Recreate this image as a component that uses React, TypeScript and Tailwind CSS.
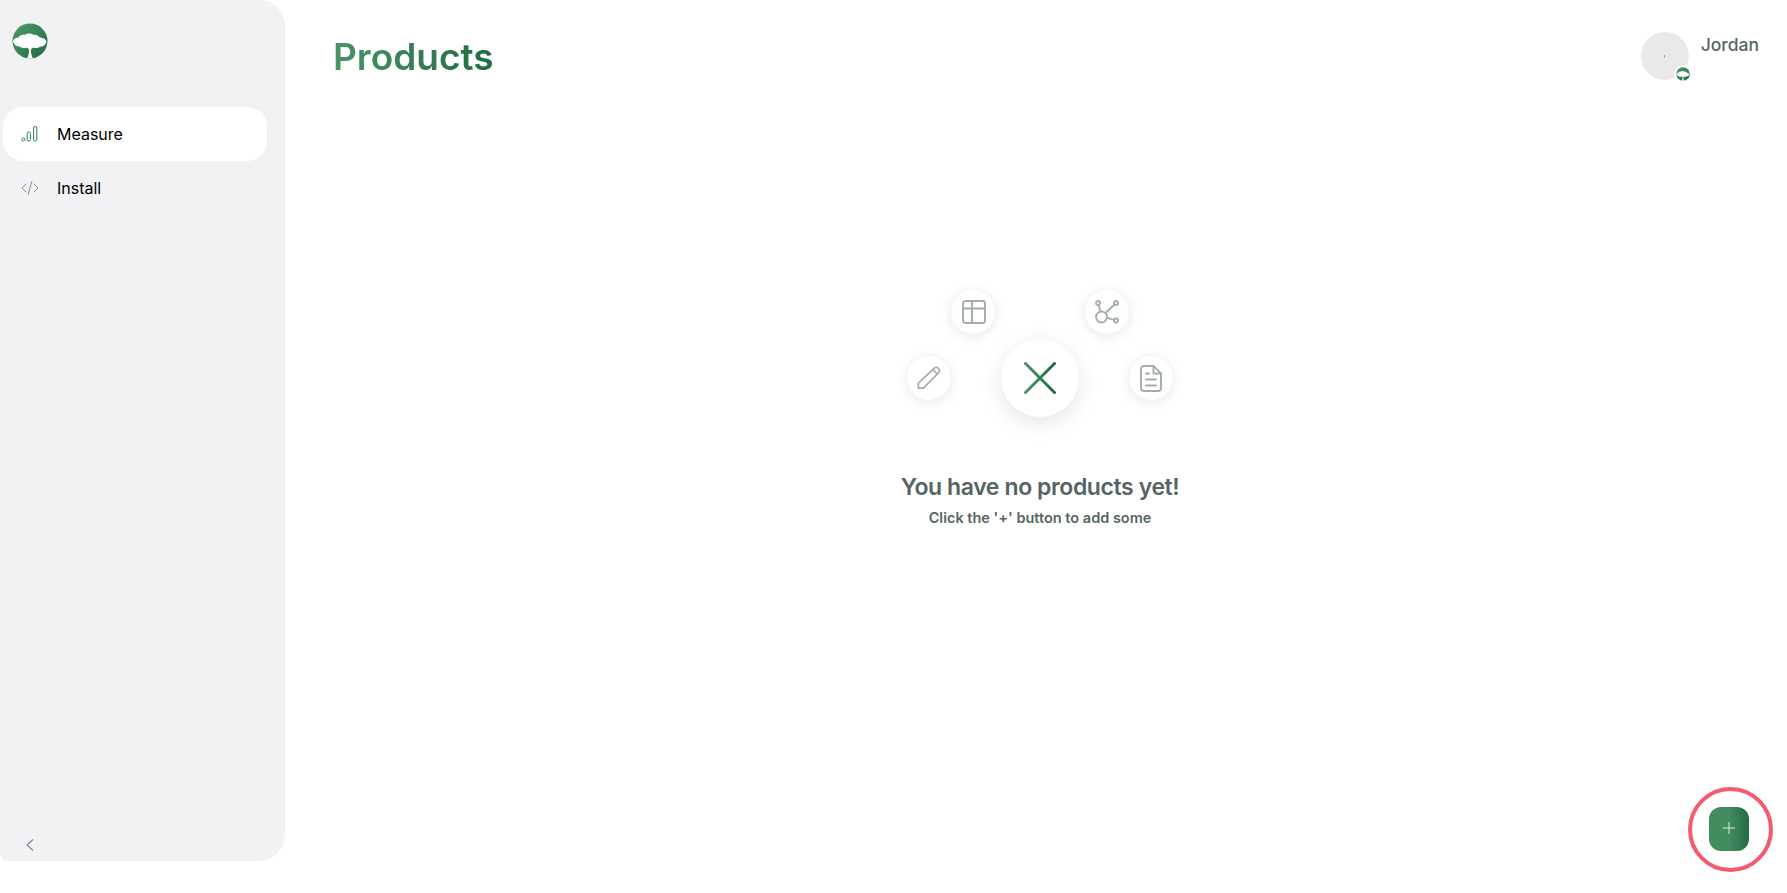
import React from 'react'

const sans = "font-['Inter','Liberation_Sans',sans-serif]"

function TreeLogo({ id, className }: { id: string; className?: string }) {
  return (
    <svg viewBox="0 0 36 36" className={className}>
      <defs>
        <linearGradient id={id} x1="0" y1="0" x2="1" y2="1">
          <stop offset="0" stopColor="#4f9a6c" />
          <stop offset="1" stopColor="#1f6b42" />
        </linearGradient>
      </defs>
      <circle cx="18" cy="18" r="17.5" fill={`url(#${id})`} />
      <path
        d="M1 18.5c.5-2.5 3-4 5.5-4 1-2 3.5-3 6-2.5 2-2 7-2 9 0 2.5-.5 5 .5 6 2.5 3 0 6 1.5 7 4-.5 3-3 5-6 5-2 1.5-5 2-7 1-1 .5-2 1-2.5 2-.2 3 .3 6 2 9h-6c1.7-3 2.2-6 2-9-.5-1-1.5-1.5-2.5-2-2 1-5 .5-7-1-3 0-5.5-2-6.5-5z"
        fill="#ffffff"
      />
    </svg>
  )
}

function MeasureIcon() {
  return (
    <svg viewBox="0 0 18 18" fill="none" stroke="#2f7d50" strokeWidth="1" className="w-[18px] h-[18px]">
      <circle cx="2.4" cy="14.6" r="1.5" />
      <rect x="6.2" y="7" width="3.2" height="9" rx="1.5" />
      <rect x="12.6" y="1.5" width="3.2" height="14.5" rx="1.5" />
    </svg>
  )
}

function CodeIcon() {
  return (
    <svg viewBox="0 0 18 18" fill="none" stroke="#8b8f92" strokeWidth="1" strokeLinecap="round" strokeLinejoin="round" className="w-[18px] h-[18px]">
      <path d="M5 5 1 9l4 4M13 5l4 4-4 4M10.8 2.5 7.2 15.5" />
    </svg>
  )
}

function TableIcon() {
  return (
    <svg viewBox="0 0 24 24" fill="none" stroke="#a4aeaa" strokeWidth="1.9" className="w-6 h-6 ml-[1px]">
      <rect x="1" y="1" width="22" height="22" rx="2.5" />
      <path d="M1 8.5h22M10 1v22" />
    </svg>
  )
}

function NetworkIcon() {
  return (
    <svg viewBox="0 0 24 24" fill="none" stroke="#a4aeaa" strokeWidth="1.9" className="w-6 h-6">
      <circle cx="6.5" cy="17" r="5.5" />
      <circle cx="3" cy="3" r="2" />
      <circle cx="21" cy="3" r="2" />
      <circle cx="21" cy="20.5" r="2" />
      <path d="M3.7 4.9 5.5 11.6M19.5 4.5 10.5 13M12 17.8 19 19.8" />
    </svg>
  )
}

function PencilIcon() {
  return (
    <svg viewBox="0 0 26 26" fill="none" stroke="#a4aeaa" strokeWidth="1.9" strokeLinejoin="round" className="w-6 h-6">
      <path d="M1.5 18.5 18.5 2.5c1.5-1.3 3.5-1.2 4.8.2 1.3 1.4 1.2 3.4-.1 4.7L7 24H1.5z" />
      <path d="M17.2 3.8 22.2 8.8" />
    </svg>
  )
}

function DocIcon() {
  return (
    <svg viewBox="0 0 22 27" fill="none" stroke="#a4aeaa" strokeWidth="1.9" strokeLinecap="round" strokeLinejoin="round" className="w-[22px] h-[27px]">
      <path d="M13.5 1H4a3 3 0 0 0-3 3v19a3 3 0 0 0 3 3h14a3 3 0 0 0 3-3V8.5z" />
      <path d="M13.5 1v7.5H21" />
      <path d="M6 8.5h3M6 14.5h10M6 20.5h10" />
    </svg>
  )
}

function CloseIcon() {
  return (
    <svg viewBox="0 0 32 32" fill="none" strokeWidth="3" strokeLinecap="round" className="w-8 h-8">
      <defs>
        <linearGradient id="closeGrad" gradientUnits="userSpaceOnUse" x1="1" y1="16" x2="31" y2="16">
          <stop offset="0" stopColor="#4a9468" />
          <stop offset="1" stopColor="#1f6b42" />
        </linearGradient>
      </defs>
      <path d="M1.5 1.5 30.5 30.5M30.5 1.5 1.5 30.5" stroke="url(#closeGrad)" />
    </svg>
  )
}

function SmallBubble({ children }: { children: React.ReactNode }) {
  return (
    <div className="w-11 h-11 rounded-full bg-white shadow-[0_2px_12px_rgba(0,0,0,0.1)] flex items-center justify-center">
      {children}
    </div>
  )
}

function Sidebar() {
  return (
    <aside className="w-[285px] h-[861px] shrink-0 bg-[#f2f2f4] rounded-r-[26px] rounded-bl-[8px] flex flex-col pl-[3px] pr-[18px]">
      <div className="pt-[23px] pl-[9px] h-[107px]">
        <TreeLogo id="sideLogo" className="w-9 h-9" />
      </div>
      <nav className="flex flex-col">
        <a className="h-[54px] rounded-[20px] bg-white flex items-center gap-[18px] pl-[18px] text-[16px] text-black">
          <MeasureIcon />
          Measure
        </a>
        <a className="h-[54px] rounded-[20px] flex items-center gap-[18px] pl-[18px] text-[16px] text-black">
          <CodeIcon />
          Install
        </a>
      </nav>
      <button className="mt-auto mb-[8px] ml-[19px] w-[16px] h-[16px] flex items-center justify-center">
        <svg viewBox="0 0 8 12" fill="none" stroke="#808488" strokeWidth="1.1" className="w-2 h-3">
          <path d="M7 .5 1 6l6 5.5" />
        </svg>
      </button>
    </aside>
  )
}

export default function App() {
  return (
    <div className={`relative w-full h-[893px] bg-white overflow-hidden flex ${sans}`}>
      <Sidebar />
      <main className="flex-1 flex flex-col min-w-0">
        <header className="flex justify-between items-start pl-[48px] pr-[28px] pt-[32px] h-[290px]">
          <h1 className="text-[37px] leading-[50px] font-semibold bg-gradient-to-r from-[#4a9468] to-[#1f6b42] bg-clip-text text-transparent">
            Products
          </h1>
          <div className="flex gap-3">
            <div className="relative w-12 h-12 rounded-full bg-[#e9e9e9] flex items-center justify-center">
              <span className="w-px h-[3px] bg-[#a9a9a9]" />
              <div className="absolute -right-[3px] bottom-[-3px] w-[18px] h-[18px] rounded-full bg-white flex items-center justify-center">
                <TreeLogo id="badgeLogo" className="w-[14px] h-[14px]" />
              </div>
            </div>
            <span className="text-[17.5px] leading-6 pt-px font-medium text-[#566563]">Jordan</span>
          </div>
        </header>
        <section className="ml-[48px] mr-[40px] flex flex-col items-center">
          <div className="flex gap-[90px]">
            <SmallBubble><TableIcon /></SmallBubble>
            <SmallBubble><NetworkIcon /></SmallBubble>
          </div>
          <div className="flex items-center gap-[50px] mt-[5px]">
            <SmallBubble><PencilIcon /></SmallBubble>
            <div className="w-[78px] h-[78px] rounded-full bg-white shadow-[0_6px_22px_rgba(0,0,0,0.1)] flex items-center justify-center">
              <CloseIcon />
            </div>
            <SmallBubble><DocIcon /></SmallBubble>
          </div>
          <h2 className="mt-[53px] text-[23px] leading-[34px] font-semibold tracking-[-0.4px] text-[#566563]">
            You have no products yet!
          </h2>
          <p className="mt-[4px] text-[14.5px] leading-5 font-semibold text-[#566563]">
            Click the '+' button to add some
          </p>
        </section>
      </main>
      <div className="absolute left-[1688px] top-[787px] w-[85px] h-[85px] rounded-full border-4 border-[#f45b6c] flex items-center justify-center pr-[3px] pb-[2px]">
        <button className="w-10 h-11 rounded-[12px] bg-gradient-to-r from-[#438c60] via-[#438c60] to-[#226b44] flex items-center justify-center pb-[2px]">
          <svg viewBox="0 0 12 12" fill="none" stroke="#dfe9e3" strokeWidth="1" className="w-3 h-3">
            <path d="M6 0v12M0 6h12" />
          </svg>
        </button>
      </div>
    </div>
  )
}
